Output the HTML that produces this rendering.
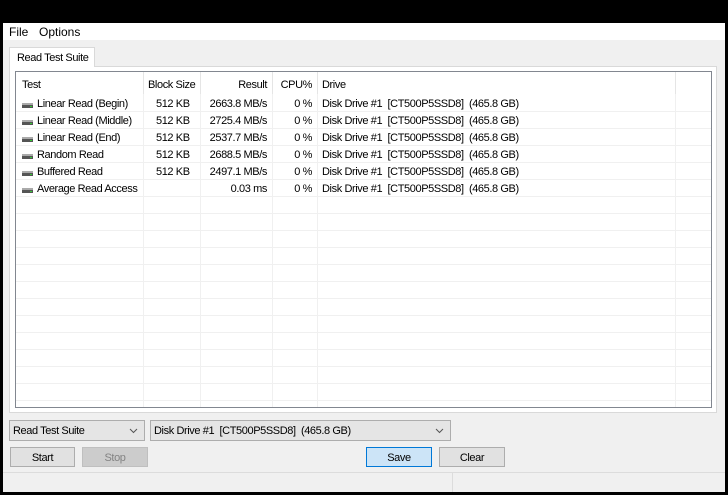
<!DOCTYPE html><html><head><style>
*{margin:0;padding:0;box-sizing:border-box}
body{width:728px;height:495px;background:#000;position:relative;overflow:hidden;font-family:"Liberation Sans",sans-serif;font-size:11px;color:#000;letter-spacing:-0.4px}
.a{position:absolute}
.win{left:3px;top:23px;width:722px;height:469px;background:#f0f0f0}
.menu{left:3px;top:23px;width:722px;height:17px;background:#fff}
.menu span{position:absolute;top:2px;font-size:12px;letter-spacing:0}
.tab{left:9px;top:47px;width:86px;height:20px;background:#fff;border:1px solid #d9d9d9;border-bottom:none;padding:4px 0 0 7px}
.panel{left:9px;top:66px;width:708px;height:347px;background:#fff;border:1px solid #d9d9d9}
.list{left:15px;top:71px;width:697px;height:337px;background:#fff;border:1px solid #828790}
.vl{position:absolute;width:1px;background:#f0f0f0;top:22px;bottom:0}
.hl{position:absolute;left:0;right:0;height:1px;background:#f0f0f0}
.hd{position:absolute;width:1px;background:#e5e5e5;top:0;height:22px}
.t{position:absolute;white-space:nowrap;font-size:11px}
.r{text-align:right}
.ic{position:absolute;width:11px;height:5px;background:#555;border-top:2px solid #aaa}
.ic:after{content:"";position:absolute;right:1px;top:1px;width:2px;height:1px;background:#3c3}
.cb{position:absolute;height:21px;border:1px solid #adadad;background:#e5e5e5;padding:4px 0 0 3px;font-size:11px}
.cb svg{position:absolute;right:6px;top:7px}
.bt{position:absolute;top:447px;height:20px;border:1px solid #adadad;background:#e1e1e1;text-align:center;padding-top:4px;font-size:11px}
</style></head><body>
<div class="a win"></div>
<div class="a menu"><span style="left:6px">File</span><span style="left:36px">Options</span></div>
<div class="a panel"></div>
<div class="a tab">Read Test Suite</div>
<div class="a list">
<div class="hd" style="left:127px"></div><div class="hd" style="left:184px"></div><div class="hd" style="left:256px"></div><div class="hd" style="left:301px"></div><div class="hd" style="left:659px"></div>
<div class="vl" style="left:127px"></div><div class="vl" style="left:184px"></div><div class="vl" style="left:256px"></div><div class="vl" style="left:301px"></div><div class="vl" style="left:659px"></div>
<div id="lines"></div>
<div class="t" style="left:6px;top:7px">Test</div>
<div class="t" style="left:132px;top:7px">Block Size</div>
<div class="t r" style="left:190px;width:61px;top:7px">Result</div>
<div class="t r" style="left:260px;width:36px;top:7px">CPU%</div>
<div class="t" style="left:306px;top:7px">Drive</div>
</div>
<div class="cb" style="left:9px;top:420px;width:136px">Read Test Suite<svg width="9" height="6"><path d="M1 1L4.5 4.5L8 1" fill="none" stroke="#555"/></svg></div>
<div class="cb" style="left:150px;top:420px;width:301px">Disk Drive #1&nbsp; [CT500P5SSD8]&nbsp; (465.8 GB)<svg width="9" height="6"><path d="M1 1L4.5 4.5L8 1" fill="none" stroke="#555"/></svg></div>
<div class="bt" style="left:10px;width:65px">Start</div>
<div class="bt" style="left:82px;width:66px;background:#ccc;border-color:#bfbfbf;color:#838383">Stop</div>
<div class="bt" style="left:366px;width:66px;background:#cce4f7;border-color:#0078d7">Save</div>
<div class="bt" style="left:439px;width:66px">Clear</div>
<div class="a" style="left:3px;top:472px;width:722px;height:1px;background:#dcdcdc"></div>
<div class="a" style="left:452px;top:473px;width:1px;height:19px;background:#dcdcdc"></div>
<script>
var h='';
for(var y=39;y<336;y+=17)h+='<div class="hl" style="top:'+y+'px"></div>';
var rows=[["Linear Read (Begin)","512 KB","2663.8 MB/s"],["Linear Read (Middle)","512 KB","2725.4 MB/s"],["Linear Read (End)","512 KB","2537.7 MB/s"],["Random Read","512 KB","2688.5 MB/s"],["Buffered Read","512 KB","2497.1 MB/s"],["Average Read Access","","0.03 ms"]];
rows.forEach(function(r,i){var y=26+i*17;
h+='<div class="ic" style="left:6px;top:'+(y+5)+'px"></div>';
h+='<div class="t" style="left:21px;top:'+y+'px">'+r[0]+'</div>';
h+='<div class="t" style="left:140px;top:'+y+'px">'+r[1]+'</div>';
h+='<div class="t r" style="left:186px;width:65px;top:'+y+'px">'+r[2]+'</div>';
h+='<div class="t r" style="left:260px;width:36px;top:'+y+'px">0 %</div>';
h+='<div class="t" style="left:306px;top:'+y+'px">Disk Drive #1&nbsp; [CT500P5SSD8]&nbsp; (465.8 GB)</div>';});
document.getElementById('lines').outerHTML=h;
</script>
</body></html>
